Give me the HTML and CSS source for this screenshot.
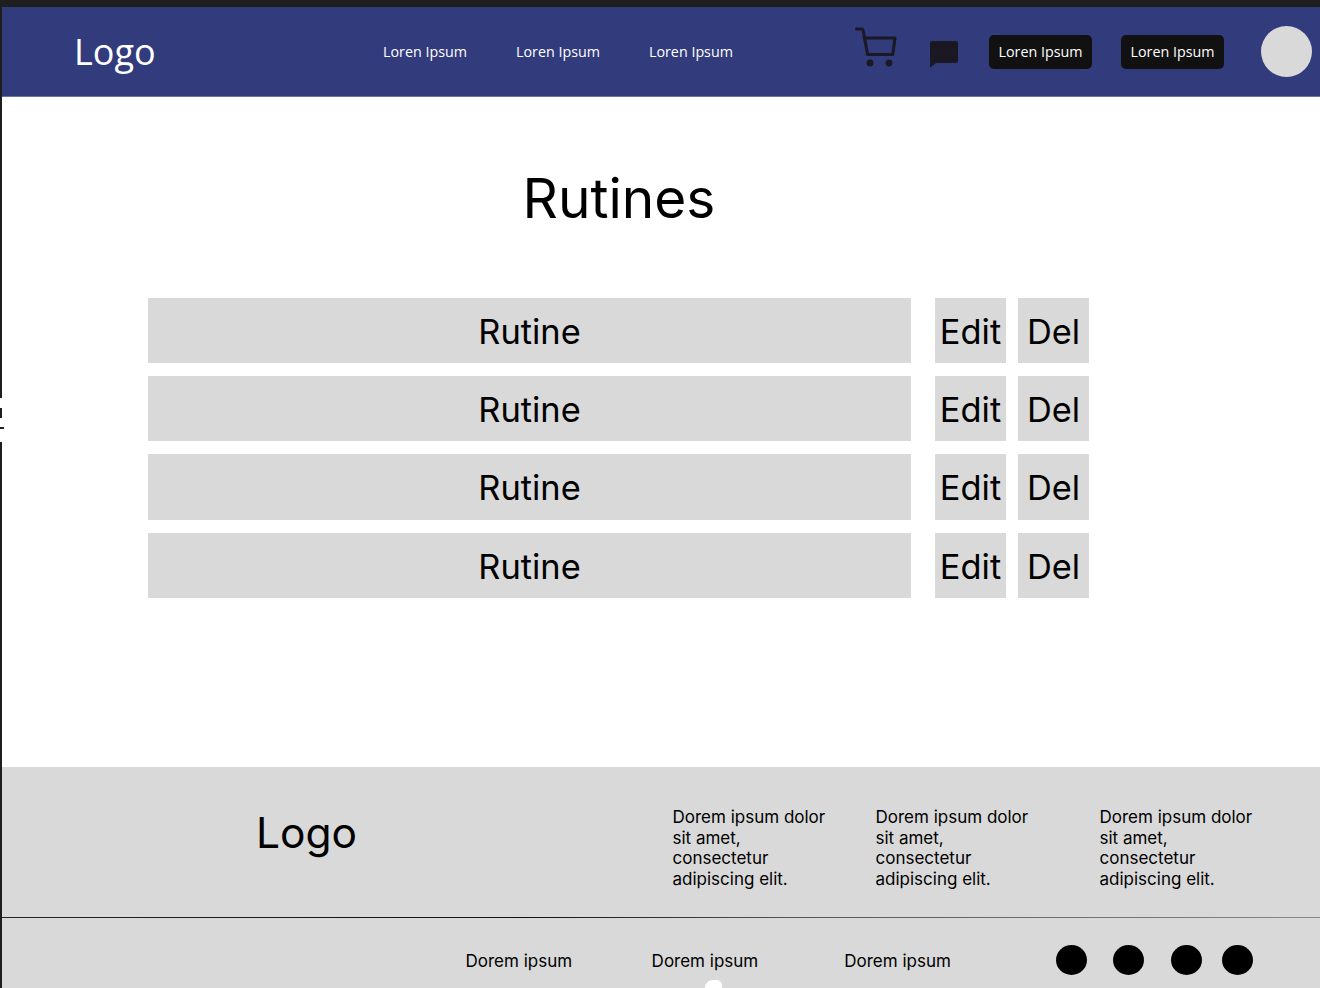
FILE: index.html
```html
<!DOCTYPE html>
<html lang="en">
<head>
  <meta charset="UTF-8">
  <title>Rutines</title>
  <link rel="stylesheet" href="styles.css">
</head>
<body>

  <div class="frame">
    <header class="topbar">
      <div class="logo">Logo</div>
      <nav class="nav">
        <a>Loren Ipsum</a>
        <a>Loren Ipsum</a>
        <a>Loren Ipsum</a>
      </nav>
      <div class="actions">
        <svg class="cart" width="42" height="40" viewBox="0 0 42 40" fill="none">
          <path d="M1.500 2h5c.8 0 1.400.5 1.600 1.300L12.600 27.500H37.800L40 11H9" stroke="#1a1822" stroke-width="3" stroke-linecap="round" stroke-linejoin="round"/>
          <circle cx="15" cy="36" r="3.400" fill="#1a1822"/>
          <circle cx="34" cy="36" r="3.400" fill="#1a1822"/>
        </svg>
        <svg class="chat" width="28" height="26" viewBox="0 0 28 26">
          <path d="M2 0h24c1 0 2 1 2 2v18c0 1-1 2-2 2H6l-6 5V2C0 1 1 0 2 0z" fill="#1a1822"/>
        </svg>
        <button class="btn">Loren Ipsum</button>
        <button class="btn btn-last">Loren Ipsum</button>
        <div class="avatar"></div>
      </div>
    </header>

    <main class="content">
      <h1>Rutines</h1>
      <div class="rows">
        <div class="row">
          <div class="cell cell-name">Rutine</div>
          <div class="cell cell-edit">Edit</div>
          <div class="cell cell-del">Del</div>
        </div>
        <div class="row">
          <div class="cell cell-name">Rutine</div>
          <div class="cell cell-edit">Edit</div>
          <div class="cell cell-del">Del</div>
        </div>
        <div class="row row-tall">
          <div class="cell cell-name">Rutine</div>
          <div class="cell cell-edit">Edit</div>
          <div class="cell cell-del">Del</div>
        </div>
        <div class="row">
          <div class="cell cell-name">Rutine</div>
          <div class="cell cell-edit">Edit</div>
          <div class="cell cell-del">Del</div>
        </div>
      </div>
    </main>

    <footer class="footer">
      <div class="footer-top">
        <div class="footer-logo">Logo</div>
        <p class="col col-a">Dorem ipsum dolor sit amet, consectetur adipiscing elit.</p>
        <p class="col col-b">Dorem ipsum dolor sit amet, consectetur adipiscing elit.</p>
        <p class="col col-c">Dorem ipsum dolor sit amet, consectetur adipiscing elit.</p>
      </div>
      <div class="footer-bottom">
        <a class="link link-a">Dorem ipsum</a>
        <a class="link link-b">Dorem ipsum</a>
        <a class="link link-c">Dorem ipsum</a>
        <div class="dots">
          <span class="dot"></span>
          <span class="dot dot-wide"></span>
          <span class="dot dot-close"></span>
          <span class="dot"></span>
        </div>
      </div>
    </footer>
  </div>

  <!-- restos blancos que quedan sobre el borde -->
  <div class="scrap scrap-left"></div>
  <div class="scrap scrap-left-low"></div>
  <div class="scrap scrap-bottom"></div>

</body>
</html>
```

FILE: styles.css
```css
* {
  margin: 0;
  padding: 0;
  box-sizing: border-box;
}

html, body {
  height: 988px;
  overflow: hidden;
}

body {
  background: #1e1e1e;
  font-family: 'Inter', sans-serif;
  color: #000;
  position: relative;
}

.frame {
  margin-left: 2px;
  padding-top: 7px;
  height: 988px;
  display: flex;
  flex-direction: column;
}

/* barra superior */
.topbar {
  height: 90px;
  background: #323b7c;
  border-bottom: 1px solid #6a72a8;
  display: flex;
  align-items: center;
  color: #fff;
}

.logo {
  width: 381px;
  padding-left: 72px;
  font-family: 'Open Sans', sans-serif;
  font-size: 36px;
}

.nav {
  display: flex;
  gap: 49px;
}

.nav a,
.btn {
  font-family: 'Open Sans', sans-serif;
  font-size: 14.300px;
  font-weight: 500;
}

.actions {
  margin-left: auto;
  display: flex;
  align-items: center;
}

.cart {
  margin-right: 33px;
  margin-top: -10px;
}

.chat {
  margin-right: 31px;
  margin-top: 4px;
}

.btn {
  width: 103px;
  height: 34px;
  background: #111;
  color: #fff;
  border: none;
  border-radius: 5px;
  margin-right: 29px;
}

.btn-last {
  margin-right: 37px;
}

.avatar {
  width: 51px;
  height: 51px;
  border-radius: 50%;
  background: #d9d9d9;
  margin-right: 8px;
}

/* contenido */
.content {
  flex: 1;
  background: #fff;
  padding-top: 68px;
}

h1 {
  width: 1234px;
  text-align: center;
  font-size: 55px;
  font-weight: 400;
  line-height: 66px;
  margin-bottom: 67px;
}

.rows {
  margin-left: 146px;
  display: flex;
  flex-direction: column;
  gap: 13px;
}

.row {
  display: flex;
  height: 65px;
}

.row-tall {
  height: 66px;
}

.cell {
  background: #d9d9d9;
  display: flex;
  align-items: center;
  justify-content: center;
  padding-top: 1px;
  font-size: 34.400px;
}

.cell-name {
  width: 763px;
}

.cell-edit,
.cell-del {
  width: 71px;
}

.cell-edit {
  margin-left: 24px;
}

.cell-del {
  margin-left: 12px;
}

/* pie */
.footer {
  height: 221px;
  background: #d9d9d9;
}

.footer-top {
  height: 151px;
  display: flex;
  border-bottom: 1px solid transparent;
  border-image: linear-gradient(90deg, #222 0%, #111 40%, #555 60%, #888 100%) 1;
}

.footer-logo {
  width: 670.500px;
  padding-left: 254px;
  padding-top: 40px;
  font-size: 42.500px;
}

.col {
  padding-top: 40px;
  font-size: 17px;
  line-height: 20.600px;
  flex: none;
  width: 160px;
}

.col-a {
  margin-right: 43px;
}

.col-b {
  margin-right: 64px;
}

.footer-bottom {
  display: flex;
  align-items: center;
  height: 70px;
  padding-top: 14px;
  font-size: 17px;
}

.link {
  margin-top: 2px;
}

.link-a {
  margin-left: 463.500px;
}

.link-b {
  margin-left: 79.500px;
}

.link-c {
  margin-left: 86px;
}

.dots {
  margin-left: 105.500px;
  display: flex;
  gap: 26px;
}

.dot {
  width: 31px;
  height: 30px;
  border-radius: 50%;
  background: #000;
}

.dot-wide {
  margin-right: 1px;
}

.dot-close {
  margin-right: -6px;
}

.scrap {
  position: absolute;
  background: #fff;
}

.scrap-left {
  left: 0;
  top: 398px;
  width: 4px;
  height: 10px;
}

.scrap-left-low {
  left: 0;
  top: 418px;
  width: 4px;
  height: 24px;
  background: linear-gradient(#fff 9px, #1e1e1e 9px, #1e1e1e 11px, #fff 11px);
}

.scrap-bottom {
  left: 705px;
  top: 980px;
  width: 17px;
  height: 8px;
  border-radius: 12px 8px 0 0;
}
```
